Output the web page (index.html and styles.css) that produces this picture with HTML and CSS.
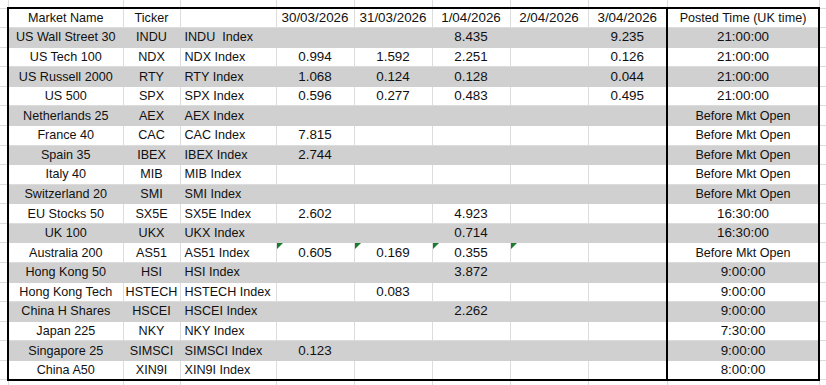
FILE: index.html
```html
<!DOCTYPE html>
<html lang="en">
<head>
  <meta charset="UTF-8">
  <meta name="viewport" content="width=device-width, initial-scale=1.0">
  <title>Index Dividends</title>
  <link rel="stylesheet" href="styles.css">
</head>
<body>
  <table class="sheet">
    <colgroup>
      <col class="w-edge-l">
      <col class="w-name">
      <col class="w-tick">
      <col class="w-idx">
      <col class="w-num">
      <col class="w-num">
      <col class="w-num">
      <col class="w-num">
      <col class="w-num-last">
      <col class="w-time">
      <col class="w-edge-r">
    </colgroup>
    <tr class="strip-top">
      <td></td><td></td><td></td><td></td><td></td><td></td><td></td><td></td><td></td><td></td><td></td>
    </tr>
    <tr class="head">
      <td></td><td class="name">Market Name</td><td class="tick">Ticker</td><td class="idx"></td>
      <td class="num">30/03/2026</td><td class="num">31/03/2026</td><td class="num">1/04/2026</td><td class="num">2/04/2026</td><td class="num">3/04/2026</td>
      <td class="time">Posted Time (UK time)</td><td></td>
    </tr>
    <tr class="grey">
      <td></td><td class="name">US Wall Street 30</td><td class="tick">INDU</td><td class="idx">INDU&nbsp; Index</td>
      <td class="num"></td><td class="num"></td><td class="num">8.435</td><td class="num"></td><td class="num">9.235</td>
      <td class="time">21:00:00</td><td></td>
    </tr>
    <tr>
      <td></td><td class="name">US Tech 100</td><td class="tick">NDX</td><td class="idx">NDX Index</td>
      <td class="num">0.994</td><td class="num">1.592</td><td class="num">2.251</td><td class="num"></td><td class="num">0.126</td>
      <td class="time">21:00:00</td><td></td>
    </tr>
    <tr class="grey">
      <td></td><td class="name">US Russell 2000</td><td class="tick">RTY</td><td class="idx">RTY Index</td>
      <td class="num">1.068</td><td class="num">0.124</td><td class="num">0.128</td><td class="num"></td><td class="num">0.044</td>
      <td class="time">21:00:00</td><td></td>
    </tr>
    <tr>
      <td></td><td class="name">US 500</td><td class="tick">SPX</td><td class="idx">SPX Index</td>
      <td class="num">0.596</td><td class="num">0.277</td><td class="num">0.483</td><td class="num"></td><td class="num">0.495</td>
      <td class="time">21:00:00</td><td></td>
    </tr>
    <tr class="grey">
      <td></td><td class="name">Netherlands 25</td><td class="tick">AEX</td><td class="idx">AEX Index</td>
      <td class="num"></td><td class="num"></td><td class="num"></td><td class="num"></td><td class="num"></td>
      <td class="time txt">Before Mkt Open</td><td></td>
    </tr>
    <tr>
      <td></td><td class="name">France 40</td><td class="tick">CAC</td><td class="idx">CAC Index</td>
      <td class="num">7.815</td><td class="num"></td><td class="num"></td><td class="num"></td><td class="num"></td>
      <td class="time txt">Before Mkt Open</td><td></td>
    </tr>
    <tr class="grey">
      <td></td><td class="name">Spain 35</td><td class="tick">IBEX</td><td class="idx">IBEX Index</td>
      <td class="num">2.744</td><td class="num"></td><td class="num"></td><td class="num"></td><td class="num"></td>
      <td class="time txt">Before Mkt Open</td><td></td>
    </tr>
    <tr>
      <td></td><td class="name">Italy 40</td><td class="tick">MIB</td><td class="idx">MIB Index</td>
      <td class="num"></td><td class="num"></td><td class="num"></td><td class="num"></td><td class="num"></td>
      <td class="time txt">Before Mkt Open</td><td></td>
    </tr>
    <tr class="grey">
      <td></td><td class="name">Switzerland 20</td><td class="tick">SMI</td><td class="idx">SMI Index</td>
      <td class="num"></td><td class="num"></td><td class="num"></td><td class="num"></td><td class="num"></td>
      <td class="time txt">Before Mkt Open</td><td></td>
    </tr>
    <tr>
      <td></td><td class="name">EU Stocks 50</td><td class="tick">SX5E</td><td class="idx">SX5E Index</td>
      <td class="num">2.602</td><td class="num"></td><td class="num">4.923</td><td class="num"></td><td class="num"></td>
      <td class="time">16:30:00</td><td></td>
    </tr>
    <tr class="grey">
      <td></td><td class="name">UK 100</td><td class="tick">UKX</td><td class="idx">UKX Index</td>
      <td class="num"></td><td class="num"></td><td class="num">0.714</td><td class="num"></td><td class="num"></td>
      <td class="time">16:30:00</td><td></td>
    </tr>
    <tr>
      <td></td><td class="name">Australia 200</td><td class="tick">AS51</td><td class="idx">AS51 Index</td>
      <td class="num flag">0.605</td><td class="num flag">0.169</td><td class="num flag">0.355</td><td class="num flag"></td><td class="num"></td>
      <td class="time txt">Before Mkt Open</td><td></td>
    </tr>
    <tr class="grey">
      <td></td><td class="name">Hong Kong 50</td><td class="tick">HSI</td><td class="idx">HSI Index</td>
      <td class="num"></td><td class="num"></td><td class="num">3.872</td><td class="num"></td><td class="num"></td>
      <td class="time">9:00:00</td><td></td>
    </tr>
    <tr>
      <td></td><td class="name">Hong Kong Tech</td><td class="tick">HSTECH</td><td class="idx">HSTECH Index</td>
      <td class="num"></td><td class="num">0.083</td><td class="num"></td><td class="num"></td><td class="num"></td>
      <td class="time">9:00:00</td><td></td>
    </tr>
    <tr class="grey">
      <td></td><td class="name">China H Shares</td><td class="tick">HSCEI</td><td class="idx">HSCEI Index</td>
      <td class="num"></td><td class="num"></td><td class="num">2.262</td><td class="num"></td><td class="num"></td>
      <td class="time">9:00:00</td><td></td>
    </tr>
    <tr>
      <td></td><td class="name">Japan 225</td><td class="tick">NKY</td><td class="idx">NKY Index</td>
      <td class="num"></td><td class="num"></td><td class="num"></td><td class="num"></td><td class="num"></td>
      <td class="time">7:30:00</td><td></td>
    </tr>
    <tr class="grey">
      <td></td><td class="name">Singapore 25</td><td class="tick">SIMSCI</td><td class="idx">SIMSCI Index</td>
      <td class="num">0.123</td><td class="num"></td><td class="num"></td><td class="num"></td><td class="num"></td>
      <td class="time">9:00:00</td><td></td>
    </tr>
    <tr class="last">
      <td></td><td class="name">China A50</td><td class="tick">XIN9I</td><td class="idx">XIN9I Index</td>
      <td class="num"></td><td class="num"></td><td class="num"></td><td class="num"></td><td class="num"></td>
      <td class="time">8:00:00</td><td></td>
    </tr>
    <tr class="strip-bottom">
      <td></td><td></td><td></td><td></td><td></td><td></td><td></td><td></td><td></td><td></td><td></td>
    </tr>
  </table>
</body>
</html>
```

FILE: styles.css
```css
body {
  margin: 0;
  background: #fff;
}
.sheet {
  border-collapse: collapse;
  table-layout: fixed;
  width: 826px;
  font-family: "Liberation Sans", Arial, sans-serif;
  font-size: 13.4px;
  color: #111;
}
.w-edge-l { width: 8px; }
.w-name { width: 115px; }
.w-tick { width: 57px; }
.w-idx { width: 96px; }
.w-num { width: 78px; }
.w-num-last { width: 79px; }
.w-time { width: 152px; }
.w-edge-r { width: 7px; }

.sheet td {
  border: 1px solid #dcdcdc;
  height: 19.58px;
  padding: 0 1px;
  white-space: nowrap;
  overflow: hidden;
  vertical-align: middle;
  line-height: 16px;
  box-sizing: border-box;
}
.sheet .strip-top td {
  height: 8px;
  border-top: none;
}
.sheet .strip-bottom td {
  height: 5px;
  border-bottom: none;
}
.sheet tr > td:first-child { border-left: none; }
.sheet tr > td:last-child { border-right: none; }

.grey td.name, .grey td.tick, .grey td.idx, .grey td.num, .grey td.time {
  background: #d0d0d0;
  border-color: #d0d0d0;
}

.name, .tick, .num, .time {
  text-align: center;
}
/* words run a touch narrower than the figures */
.sheet td.name, .sheet td.tick, .sheet td.idx, .sheet td.txt,
.sheet .head td.time {
  font-size: 12.6px;
}
.sheet td.idx {
  text-align: left;
  padding-left: 4px;
}

/* thick outline round the data block */
.sheet td.name { border-left: 2px solid #000; }
.sheet td.time {
  border-left: 2px solid #000;
  border-right: 2px solid #000;
}
.sheet .head td.name, .sheet .head td.tick, .sheet .head td.idx,
.sheet .head td.num, .sheet .head td.time {
  border-top: 2px solid #000;
}
.sheet .last td.name, .sheet .last td.tick, .sheet .last td.idx,
.sheet .last td.num, .sheet .last td.time {
  border-bottom: 2px solid #000;
}

/* excel "number stored as text" marker */
.flag {
  position: relative;
}
.flag::before {
  content: "";
  position: absolute;
  top: 0;
  left: 0;
  border-top: 6px solid #1a7a2e;
  border-right: 6px solid transparent;
}
```
